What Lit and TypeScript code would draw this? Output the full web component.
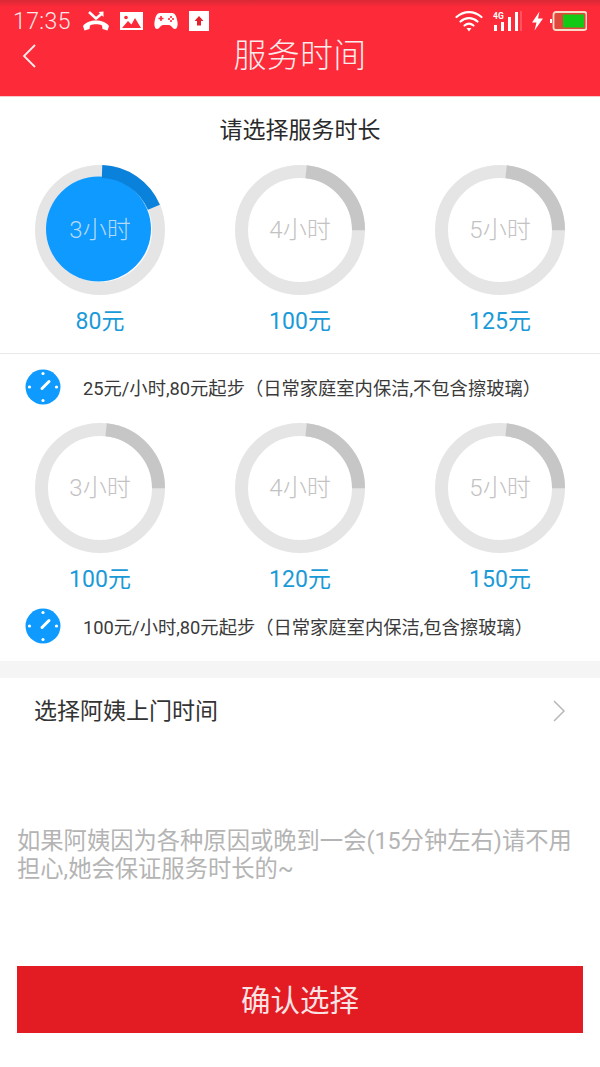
import { LitElement, html, css, svg } from "lit";
import { customElement } from "lit/decorators.js";

const FONT = css`Roboto, "Noto Sans CJK SC", sans-serif`;

@customElement("app-root")
export class AppRoot extends LitElement {
  static styles = css`
    :host { display: block; width: 600px; height: 1067px; background: #fff; font-family: ${FONT}; overflow: hidden; color: #333; }
    .head { height: 97px; box-sizing: border-box; background: linear-gradient(#d92836 0, #fd2a39 7px); border-bottom: 1px solid #f6c9cc; display: flex; flex-direction: column; color: #fff; }
    .status { height: 34px; display: flex; align-items: center; padding: 7px 13px 0 13px; box-sizing: border-box; }
    .time { font-size: 23px; line-height: 29px; padding-top: 2px; font-weight: 300; color: #f8e8e8; width: 70px; letter-spacing: 0.4px; }
    .sicons { display: flex; align-items: center; gap: 11px; }
    .sright { margin-left: auto; display: flex; align-items: center; }
    .wifi-gap { margin-left: 10px; }
    .bolt-gap { margin-left: 9px; }
    .batt-gap { margin-left: 6px; }
    .nav { flex: 1; display: grid; grid-template-columns: 1fr auto 1fr; align-items: center; padding-bottom: 18px; }
    .back { padding-left: 22px; display: flex; }
    .title { font-size: 33px; font-weight: 300; color: #fbecec; letter-spacing: 0.2px; line-height: 42px; }
    .pick { text-align: center; font-size: 23px; line-height: 32px; margin-top: 18px; color: #2a2a2a; font-weight: 400; }
    .rings { display: grid; grid-template-columns: repeat(3, 200px); justify-items: center; }
    .rings.first { margin-top: 17px; }
    .cell { display: flex; flex-direction: column; align-items: center; }
    .ring { display: grid; width: 132px; height: 132px; place-items: center; }
    .ring > * { grid-area: 1 / 1; }
    .ring span { font-size: 24px; line-height: 32px; font-weight: 300; color: #c2c2c2; margin-bottom: 1px; }
    .ring.on span { color: #b5d9f7; }
    .price { font-size: 23px; line-height: 32px; color: #1b9ad8; margin-top: 10px; }
    .rule { height: 1px; background: #e8e8e8; margin-top: 15px; }
    .info { display: flex; align-items: center; height: 66px; padding-left: 25px; font-size: 18.3px; color: #3a3a3a; white-space: nowrap; }
    .info svg { margin-right: 22px; flex: none; }
    .info.one { margin-bottom: 2px; }
    .info.two { height: 60px; }
    .band { height: 17px; background: #f5f5f5; margin-top: 5px; }
    .row { display: flex; align-items: center; justify-content: space-between; height: 66px; padding: 0 34px; font-size: 23px; color: #333; }
    .row span { margin-bottom: 5px; }
    .hint-wrap { height: 222px; box-sizing: border-box; padding: 83px 17px 0; }
    .hint { font-size: 23.3px; line-height: 28px; color: #b4b4b4; }
    .btn { display: block; margin: 0 17px; width: 566px; height: 67px; border: 0; background: #e31b23; color: #fbe3e3; font: 400 29.5px ${FONT}; padding: 0 0 4px; }
  `;

  ring(label: string, on = false) {
    const r = 58.5, c = 2 * Math.PI * r;
    const start = on ? 2 : 6, sweep = on ? 65 : 84;
    return html`<div class="ring ${on ? "on" : ""}">
      <svg width="132" height="132" viewBox="0 0 132 132">
        <circle cx="66" cy="66" r=${r} fill="none" stroke="#e5e5e5" stroke-width="13"/>
        ${on ? svg`<circle cx="64.5" cy="65" r="52.5" fill="#0f9aff"/>` : ""}
        <circle cx="66" cy="66" r=${r} fill="none" stroke=${on ? "#0a82dc" : "#c6c6c6"} stroke-width="13"
          stroke-dasharray="${(c * sweep) / 360} ${c}" transform="rotate(${start - 90} 66 66)"/>
      </svg>
      <span>${label}</span>
    </div>`;
  }

  clock() {
    return html`<svg width="36" height="36" viewBox="0 0 36 36">
      <circle cx="18" cy="18" r="17.5" fill="#0f9aff"/>
      <g fill="#fff"><circle cx="18" cy="4.5" r="1.6"/><circle cx="18" cy="31.5" r="1.6"/><circle cx="4.5" cy="18" r="1.6"/><circle cx="31.5" cy="18" r="1.6"/></g>
      <path d="M17 19.500 24 12.500" stroke="#fff" stroke-width="3" stroke-linecap="round"/>
    </svg>`;
  }

  cell(label: string, price: string, on = false) {
    return html`<div class="cell">${this.ring(label, on)}<div class="price">${price}</div></div>`;
  }

  render() {
    return html`
      <div class="head">
        <div class="status">
          <div class="time">17:35</div>
          <div class="sicons">
            <svg width="26" height="20" viewBox="0 0 26 20" fill="#fff"><path d="M0 15c3-4 8-5.500 13-5.500s10 1.500 13 5.500l-1.500 4.500-5-1.500-.5-3.500c-2-1-4-1.200-6-1.200s-4 .2-6 1.200L6.500 18l-5 1.500z"/><path d="M6 1l7 6.500L19 2.500" fill="none" stroke="#fff" stroke-width="2.500"/><path d="M20.500 0.500v5.500l-5-5z"/></svg>
            <svg width="23" height="18" viewBox="0 0 23 18"><rect width="23" height="18" fill="#fff"/><path d="M2 16 8 9l3.500 3.500L15 6l6 10z" fill="#fd2a39"/><circle cx="6" cy="5.500" r="1.800" fill="#fd2a39"/></svg>
            <svg width="24" height="18" viewBox="0 0 24 18"><path d="M6 1h12c3 0 4.500 3 5.500 9 .5 4-.5 7-2.500 7-2.500 0-3.500-4-6-4H9c-2.500 0-3.500 4-6 4-2 0-3-3-2.500-7C1.500 4 3 1 6 1z" fill="#fff"/><path d="M7 4v5M4.500 6.500h5" stroke="#fd2a39" stroke-width="1.600"/><circle cx="17" cy="5" r="1.100" fill="#fd2a39"/><circle cx="17" cy="9" r="1.100" fill="#fd2a39"/><circle cx="15" cy="7" r="1.100" fill="#fd2a39"/><circle cx="19" cy="7" r="1.100" fill="#fd2a39"/></svg>
            <svg width="20" height="20" viewBox="0 0 20 20"><rect width="20" height="20" fill="#fff"/><path d="M10 5 14.500 10H12v4.500H8V10H5.500z" fill="#e3222f"/></svg>
          </div>
          <div class="sright">
            <svg width="28" height="22" viewBox="0 0 28 22" fill="none" stroke="#fff" stroke-width="2.200" stroke-linecap="round"><path d="M1.500 7C9 .5 19 .5 26.500 7"/><path d="M5.500 11.500C10.500 7 17.500 7 22.500 11.500"/><path d="M9.500 15.500c3-2.500 6-2.500 9 0"/><path d="M11.500 18h5l-2.500 3.500z" fill="#fff" stroke="none"/></svg>
            <svg class="wifi-gap" width="29" height="22" viewBox="0 0 29 22"><g fill="#fff"><rect x="1" y="15" width="3" height="6"/><rect x="8" y="12" width="3" height="9"/><rect x="15" y="7" width="3" height="14"/><rect x="22" y="2" width="3" height="19"/></g><rect x="27.500" y="1" width="1" height="20" fill="#ffffff" opacity=".4"/><text x="0" y="8.500" font-size="8.500" font-weight="700" fill="#fff" font-family="Roboto">4G</text></svg>
            <svg class="bolt-gap" width="13" height="20" viewBox="0 0 13 19" fill="#fff"><path d="M8.500 0 1 11h4.500L3.500 19 12 7H7z"/></svg>
            <svg class="batt-gap" width="37" height="20" viewBox="0 0 37 20"><rect x="0" y="8" width="2" height="4" fill="#fff"/><rect x="3.500" y="1" width="33" height="18" rx="2.500" fill="#e0483c" stroke="#f7dcc8" stroke-width="1.800"/><rect x="13" y="3.500" width="21" height="13" fill="#12c916"/></svg>
          </div>
        </div>
        <div class="nav">
          <div class="back"><svg width="14" height="26" viewBox="0 0 14 26" fill="none" stroke="#fbecec" stroke-width="1.800"><path d="M13 2 2 13l11 11"/></svg></div>
          <div class="title">服务时间</div>
          <div></div>
        </div>
      </div>
      <div class="pick">请选择服务时长</div>
      <div class="rings first">
        ${this.cell("3小时", "80元", true)}${this.cell("4小时", "100元")}${this.cell("5小时", "125元")}
      </div>
      <div class="rule"></div>
      <div class="info one">${this.clock()}<span>25元/小时,80元起步（日常家庭室内保洁,不包含擦玻璃）</span></div>
      <div class="rings second">
        ${this.cell("3小时", "100元")}${this.cell("4小时", "120元")}${this.cell("5小时", "150元")}
      </div>
      <div class="info two">${this.clock()}<span>100元/小时,80元起步（日常家庭室内保洁,包含擦玻璃）</span></div>
      <div class="band"></div>
      <div class="row"><span>选择阿姨上门时间</span>
        <svg width="14" height="22" viewBox="0 0 14 22" fill="none" stroke="#b8b8b8" stroke-width="1.500"><path d="M2 1l10 10L2 21"/></svg>
      </div>
      <div class="hint-wrap"><div class="hint">如果阿姨因为各种原因或晚到一会(15分钟左右)请不用担心,她会保证服务时长的~</div></div>
      <button class="btn">确认选择</button>
    `;
  }
}
